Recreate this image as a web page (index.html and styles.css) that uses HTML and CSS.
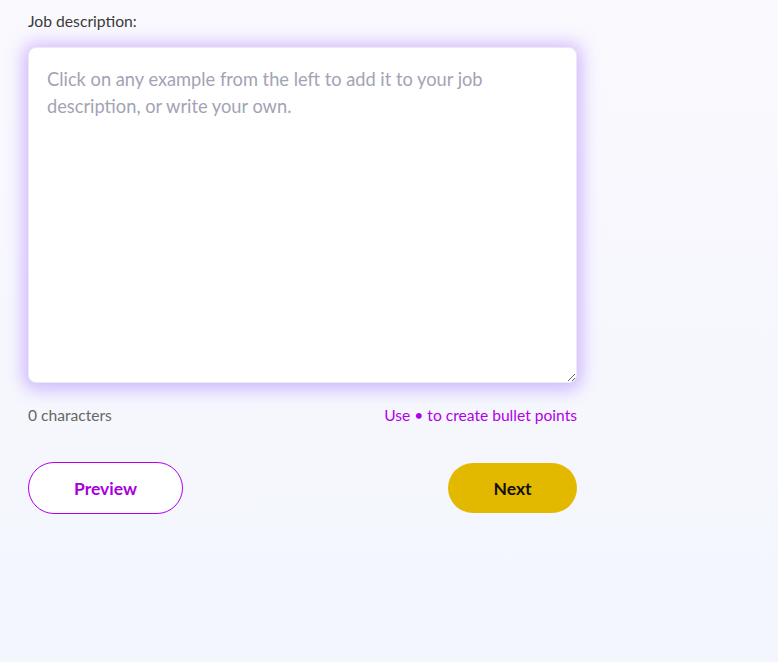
FILE: index.html
```html
<!DOCTYPE html>
<html lang="en">
<head>
<meta charset="utf-8">
<title>Job description</title>
<link rel="stylesheet" href="styles.css">
</head>
<body>
<main class="page">
  <label class="label" for="desc">Job description:</label>
  <textarea id="desc" class="editor" placeholder="Click on any example from the left to add it to your job description, or write your own."></textarea>
  <div class="meta">
    <span class="count">0 characters</span>
    <span class="hint">Use • to create bullet points</span>
  </div>
  <div class="actions">
    <button class="btn btn-outline">Preview</button>
    <button class="btn btn-primary">Next</button>
  </div>
</main>
</body>
</html>
```
FILE: styles.css
```css
html, body {
  margin: 0;
  height: 100%;
}
body {
  background: linear-gradient(180deg, #faf9fe 0%, #f3f6fd 100%);
  font-family: Lato, "Open Sans", sans-serif;
  color: #333;
}
.page {
  width: 549px;
  padding: 12px 0 0 28px;
  display: flex;
  flex-direction: column;
}
.label {
  font-size: 15.7px;
  color: #3a3a3a;
  line-height: 18px;
}
.editor {
  margin-top: 17px;
  box-sizing: border-box;
  width: 549px;
  height: 336px;
  border: 1px solid #ece9f2;
  border-radius: 8px;
  background: #fff;
  padding: 18px 18px;
  font-family: Lato, sans-serif;
  font-size: 18.25px;
  line-height: 27px;
  color: #333;
  box-shadow: 0 0 16px 5px rgba(196, 150, 255, 0.5), 0 6px 16px 2px rgba(190, 180, 255, 0.35);
  outline: none;
}
.editor::placeholder {
  color: #a3a3b5;
}
.meta {
  margin-top: 23px;
  display: flex;
  justify-content: space-between;
  font-size: 15.6px;
  line-height: 18px;
}
.count { color: #666; }
.hint { color: #b100e8; }
.actions {
  margin-top: 38px;
  display: flex;
  justify-content: space-between;
  align-items: center;
}
.btn {
  font-family: Lato, sans-serif;
  font-weight: 700;
  font-size: 17.5px;
  border-radius: 26px;
  cursor: pointer;
  padding: 0;
}
.btn-outline {
  width: 155px;
  height: 52px;
  background: #fff;
  border: 1px solid #b100e8;
  color: #a600dc;
}
.btn-primary {
  width: 129px;
  height: 50px;
  background: #e3b900;
  border: none;
  color: #111;
}
```
